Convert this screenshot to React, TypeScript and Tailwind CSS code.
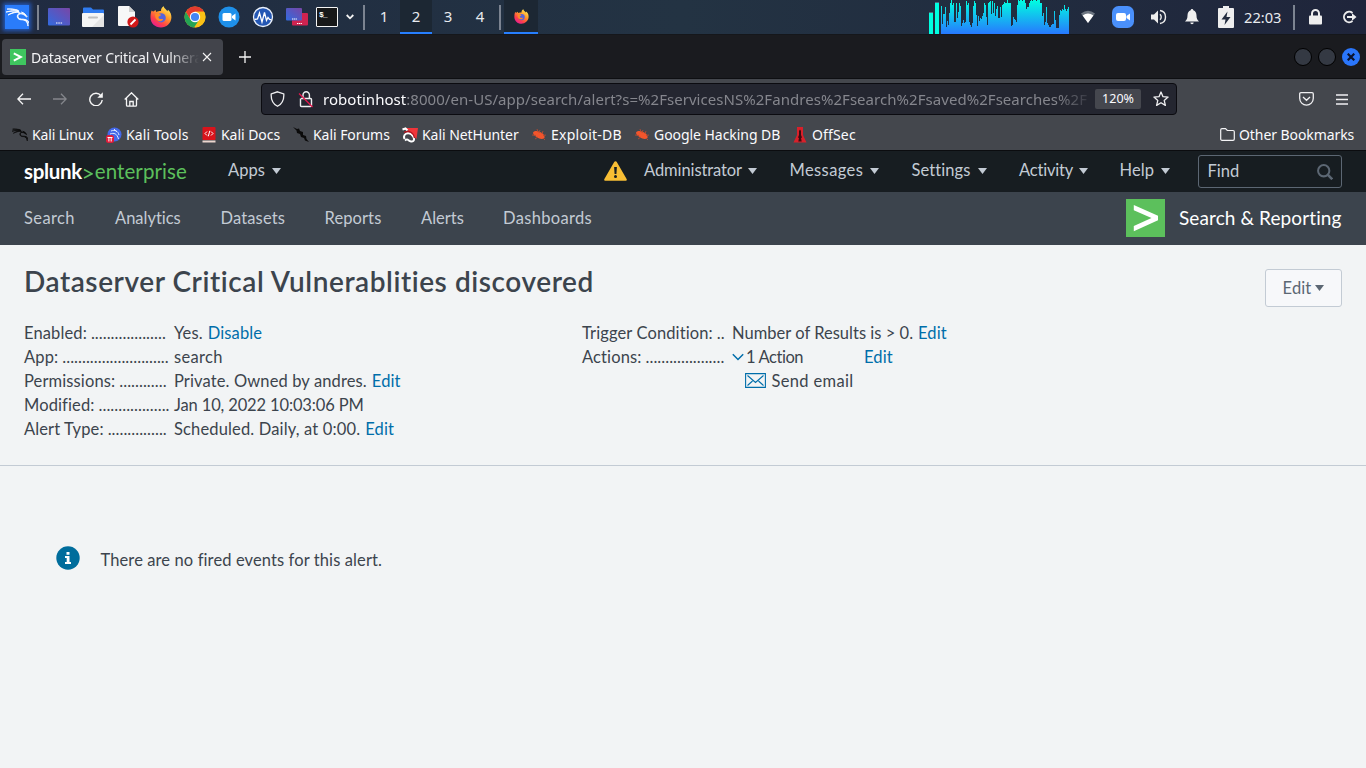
import type { ReactNode } from "react";
import { SiKalilinux } from "react-icons/si";

const LOAD = [
  18, 72, 42, 42, 22, 80, 63, 75, 38, 10, 0, 14, 10, 66, 66, 10, 54, 36, 8, 18, 78, 70, 60, 68, 66, 2, 14, 10, 65, 76,
  80, 70, 18, 2, 10, 45, 78, 48, 62, 54, 58, 48, 38, 10, 16, 50, 74, 8, 5, 3, 42, 2, 40, 10, 48, 26, 18, 55, 54, 20,
  50, 14, 12, 5, 10, 10, 0, 8, 10, 10, 78, 74, 50, 58, 60, 66, 15, 0, 4, 0, 0, 3, 0, 0, 8, 26, 20, 22, 8, 4, 0, 3, 0,
  0, 0, 4, 0, 0, 0, 8, 10, 48, 40, 76, 66, 22, 68, 74, 82, 82, 74, 72, 72, 32, 60, 84, 84, 84, 45, 30, 33, 28, 30, 15,
  26, 34, 28, 22,
];

function LoadGraph() {
  return (
    <svg className="ml-[1px] h-[34px] w-[129px] shrink-0" viewBox="0 0 129 34" shapeRendering="crispEdges">
      <defs>
        <linearGradient id="load" x1="0" y1="0" x2="0" y2="34" gradientUnits="userSpaceOnUse">
          <stop offset="0" stopColor="#00ffe0" />
          <stop offset="1" stopColor="#2778ff" />
        </linearGradient>
      </defs>
      {LOAD.map((top, i) => (
        <rect key={i} x={i} y={top / 3} width="1" height={34 - top / 3} fill="url(#load)" />
      ))}
    </svg>
  );
}

function Firefox({ size }: { size: number }) {
  return (
    <svg width={size} height={size} viewBox="0 0 22 22" className="shrink-0">
      <defs>
        <linearGradient id="fox" x1="0.85" y1="0.05" x2="0.25" y2="0.95">
          <stop offset="0" stopColor="#fff05a" />
          <stop offset="0.4" stopColor="#ff9a2a" />
          <stop offset="0.75" stopColor="#ff4248" />
          <stop offset="1" stopColor="#e9208b" />
        </linearGradient>
      </defs>
      <path
        fill="url(#fox)"
        d="M1.6 4.5C2.4 5.2 3 5.7 3.5 5.6C4 4.7 4.8 4.2 5.6 3.9L6.2 6C8 5 9 5.1 11 5C10.8 3 12 1 13.8 0.2C13.8 2.4 16.4 3.3 17.4 5.2L18 3.8C20.6 6.2 21.6 9 21.4 11.8C21 17.6 16.4 21.5 11 21.5C5 21.5 0.5 17.2 0.5 11.2C0.5 8.7 0.8 6.6 1.6 4.5Z"
      />
      <circle cx="11.2" cy="11.8" r="4.6" fill="#5464dc" />
      <path fill="#ff8a26" d="M5 8.3C7.4 7 9.3 8 10.7 8.5C11.6 9.6 9.4 10.1 8.6 10.7C8 12 9.6 13.4 11.4 13C13 12.6 13.4 13.4 12.6 14.2C9.2 16.6 5 14.4 5 8.3Z" />
    </svg>
  );
}

function Chrome() {
  return (
    <svg width="22" height="22" viewBox="0 0 22 22" className="shrink-0">
      <circle cx="11" cy="11" r="10.5" fill="#fbc116" />
      <path d="M1.9 5.7A10.5 10.5 0 0 0 10 21.5L15.5 13.6L11 16L6.5 13.6Z" fill="#23a455" />
      <path d="M1.9 5.7A10.5 10.5 0 0 1 20.1 5.8L11 5.8L6.5 13.6Z" fill="#e33b2e" />
      <path d="M20.1 5.8H11L15.5 13.6L11 21.5A10.5 10.5 0 0 0 20.1 5.8Z" fill="#fbc116" />
      <circle cx="11" cy="11" r="5.2" fill="#fff" />
      <circle cx="11" cy="11" r="4.1" fill="#4285f4" />
    </svg>
  );
}

function Desk({ n, active }: { n: string; active?: boolean }) {
  return (
    <div
      className={
        active
          ? "flex h-[34px] w-8 items-center justify-center border-b-2 border-[#277fff] bg-[#1c2733] pt-[1px]"
          : "flex h-[34px] w-8 items-center justify-center pb-[1px]"
      }
    >
      {n}
    </div>
  );
}

function Taskbar() {
  return (
    <div className="flex h-[34px] items-center bg-linear-to-r from-[#202b41] via-[#233343] to-[#1f253b] font-['Noto_Sans',sans-serif] text-[15px] text-[#e8ebef]">
      <div className="ml-[5px] flex size-6 items-center justify-center bg-[#2a7cfb] shadow-[0_0_4px_2px_#2458b8]">
        <SiKalilinux className="size-[23px] stroke-white stroke-[0.9] text-white" />
      </div>
      <div className="ml-2 h-[25px] w-[2px] bg-[#7c8491]" />
      <svg className="ml-[9px] h-[18px] w-[22px] shrink-0" viewBox="0 0 22 18">
        <defs>
          <linearGradient id="desk" x1="0" y1="1" x2="1" y2="0">
            <stop offset="0" stopColor="#316be0" />
            <stop offset="1" stopColor="#7946a6" />
          </linearGradient>
        </defs>
        <rect width="22" height="17.5" rx="1" fill="url(#desk)" />
        <path d="M8 15h1.500M10.300 15h1.500M12.600 15h1.500" stroke="#fff" strokeWidth="1" />
      </svg>
      <svg className="ml-3 h-5 w-[22px] shrink-0" viewBox="0 0 22 20">
        <path d="M1 1.500a1 1 0 0 1 1-1h7l2 2h10a1 1 0 0 1 1 1V8H1Z" fill="#2f7bf0" />
        <rect y="6" width="22" height="14" rx="1" fill="#f5f5f5" />
        <path d="M22 8v11a1 1 0 0 1-1 1H10Z" fill="#e4e4e4" />
        <rect x="6" y="9.500" width="10" height="2" rx="1" fill="#c0c0c0" />
      </svg>
      <svg className="ml-[14px] h-[22px] w-[21px] shrink-0" viewBox="0 0 21 22">
        <path d="M1 0h10l6 6v14H1a1 1 0 0 1-1-1V1a1 1 0 0 1 1-1Z" fill="#f7f7f7" />
        <path d="M11 0l6 6h-6Z" fill="#d0d0d0" />
        <circle cx="15" cy="16" r="5.600" fill="#d21919" />
        <path d="M12.500 18.500l5-5" stroke="#fff" strokeWidth="1.800" />
      </svg>
      <div className="ml-[11px] flex">
        <Firefox size={22} />
      </div>
      <div className="ml-3 flex">
        <Chrome />
      </div>
      <svg className="ml-3 size-[22px] shrink-0" viewBox="0 0 22 22">
        <circle cx="11" cy="11" r="10.500" fill="#1e90ea" />
        <rect x="4.500" y="7" width="9" height="8" rx="1.500" fill="#fff" />
        <path d="M14 10l3.500-2.500v7L14 12Z" fill="#fff" />
      </svg>
      <svg className="ml-3 size-[22px] shrink-0" viewBox="0 0 22 22">
        <circle cx="11" cy="11" r="9.500" fill="#2457b4" stroke="#eaf1fb" strokeWidth="1.300" />
        <path d="M2.500 13.500L5.500 13l2-6 2.500 9 2.500-9.500 2 8 1.500-3 1.500 2 2 .3" fill="none" stroke="#fff" strokeWidth="1.300" />
      </svg>
      <svg className="ml-3 h-[18px] w-[22px] shrink-0" viewBox="0 0 22 18">
        <rect x="6" y="5" width="16" height="12.500" rx="1" fill="#cf2350" />
        <rect width="16" height="12.500" rx="1" fill="url(#desk)" />
        <path d="M6 11h5M11 15.500h5" stroke="#fff" strokeWidth="1" strokeDasharray="1.300 .5" />
      </svg>
      <div className="ml-2 flex h-5 w-[22px] rounded-[1px] border border-[#f4f4f4] bg-[#171819] pt-[2px] pl-[2px] font-['Liberation_Mono',monospace] text-[8px] leading-[9px] font-bold tracking-[-1px] text-white">
        $_
      </div>
      <svg className="ml-2 h-[6px] w-2 shrink-0" viewBox="0 0 8 6">
        <path d="M.7 1l3.300 3.300L7.300 1" fill="none" stroke="#f4f4f4" strokeWidth="1.800" />
      </svg>
      <div className="ml-[9px] h-[25px] w-[2px] bg-[#7c8491]" />
      <div className="ml-[3px] flex">
        <Desk n="1" />
        <Desk n="2" active />
        <Desk n="3" />
        <Desk n="4" />
      </div>
      <div className="ml-[3px] h-[25px] w-[2px] bg-[#7c8491]" />
      <div className="ml-[3px] flex h-[34px] w-[34px] items-center justify-center border-b-2 border-[#277fff] bg-[#1c2733]">
        <Firefox size={15} />
      </div>
      <svg className="ml-auto h-[34px] w-[11px] shrink-0" viewBox="0 0 11 34" shapeRendering="crispEdges">
        <path d="M0 13h4v21H0ZM6 3h4v31H6Z" fill="#00ffe0" />
        <path d="M0 12h4v1H0ZM6 2h4v1H6Z" fill="#4a6f80" />
      </svg>
      <LoadGraph />
      <svg className="ml-[11px] h-[14px] w-[14px] shrink-0" viewBox="0 0 14 14">
        <path d="M0 3.500Q7-2 14 3.500L7 13Z" fill="#6d7682" />
        <path d="M1.600 5.500Q7 1.500 12.400 5.500L7 13Z" fill="#fff" />
      </svg>
      <svg className="ml-[17px] size-[22px] shrink-0" viewBox="0 0 22 22">
        <rect width="22" height="22" rx="6.500" fill="#4a90fb" />
        <rect x="4" y="7" width="10" height="8" rx="2" fill="#fff" />
        <path d="M14.500 10l3.500-2.500v7L14.500 12Z" fill="#fff" />
      </svg>
      <svg className="ml-[17px] h-4 w-4 shrink-0" viewBox="0 0 16 16">
        <path d="M0 5.500h3L7 1.500v13L3 10.500H0Z" fill="#eee" />
        <path d="M9 5.200c1.600 1.600 1.600 4 0 5.600M9 1.500c3 .5 5.500 3 5.500 6.500S12 14 9 14.500" fill="none" stroke="#eee" strokeWidth="1.400" />
      </svg>
      <svg className="ml-[18px] h-4 w-[14px] shrink-0" viewBox="0 0 14 16">
        <path d="M7 0c.8 0 1.300.6 1.300 1.300C10.500 2 11.500 4 11.500 6.500c0 3 .8 4.500 2.500 6H0c1.700-1.500 2.500-3 2.500-6C2.500 4 3.500 2 5.700 1.300 5.700.6 6.200 0 7 0ZM5.300 13.500h3.400a1.700 1.700 0 0 1-3.400 0Z" fill="#f0f0f0" />
      </svg>
      <svg className="ml-[19px] h-[22px] w-4 shrink-0" viewBox="0 0 16 22">
        <path d="M5 0h6v2h4a1 1 0 0 1 1 1v18a1 1 0 0 1-1 1H1a1 1 0 0 1-1-1V3a1 1 0 0 1 1-1h4Z" fill="#eee" />
        <path d="M9.500 5.500L3.500 13.500H7.500L6.500 19L12.500 11H8.500Z" fill="#222b3e" />
      </svg>
      <div className="ml-[10px] w-[38px] pb-[1px] text-[14.67px]">22:03</div>
      <div className="ml-[11px] h-[25px] w-[2px] bg-[#7c8491]" />
      <svg className="ml-[14px] h-4 w-[13px] shrink-0" viewBox="0 0 13 16">
        <path d="M3 7.500V4.500a3.500 3.500 0 0 1 7 0v3" fill="none" stroke="#eee" strokeWidth="2" />
        <rect y="6.500" width="13" height="9" rx="1" fill="#eee" />
      </svg>
      <svg className="mr-[9px] ml-5 h-[14px] w-[15px] shrink-0" viewBox="0 0 15 14">
        <path d="M10.500 3A5.200 5.200 0 1 0 10.500 11" fill="none" stroke="#eee" strokeWidth="1.900" />
        <path d="M5 6h5V3.300L14.500 7L10 10.700V8H5Z" fill="#eee" />
      </svg>
    </div>
  );
}

function TabStrip() {
  return (
    <div className="flex h-11 items-center border-t border-[#15171b] bg-[#1a1b1f] font-['Noto_Sans',sans-serif]">
      <div className="ml-[2px] flex h-9 w-[221px] items-center rounded-[4px] bg-[#42444b]">
        <div className="ml-2 flex size-4 items-center justify-center bg-[#3fc65f]">
          <svg className="h-[10px] w-[10px]" viewBox="0 0 10 10">
            <path d="M.8 1.300L8 5L.8 8.700" fill="none" stroke="#fff" strokeWidth="2" />
          </svg>
        </div>
        <div className="ml-[5px] w-[168px] mask-r-from-82% mask-r-to-100% pt-[2px] text-[14px] leading-5 tracking-[-0.140px] whitespace-nowrap text-[#f4f4f6]">
          Dataserver Critical Vulnera
        </div>
        <svg className="ml-[3px] size-[10px]" viewBox="0 0 10 10">
          <path d="M1 1l8 8M9 1L1 9" stroke="#f4f4f4" strokeWidth="1.100" />
        </svg>
      </div>
      <svg className="ml-4 size-3" viewBox="0 0 12 12">
        <path d="M6 0v12M0 6h12" stroke="#f4f4f4" strokeWidth="1.300" />
      </svg>
      <div className="mr-[6px] ml-auto flex gap-[6px]">
        <div className="size-[18px] rounded-full border border-black bg-[#343943]" />
        <div className="size-[18px] rounded-full border border-black bg-[#343943]" />
        <div className="flex size-[18px] items-center justify-center rounded-full bg-[#2a76fb]">
          <svg className="size-2" viewBox="0 0 8 8">
            <path d="M.7.7l6.600 6.600M7.300.7L.7 7.300" stroke="#0b1430" strokeWidth="2.200" />
          </svg>
        </div>
      </div>
    </div>
  );
}

function UrlRow() {
  return (
    <div className="flex h-[41px] items-center border-t border-[#0e0f12] bg-[#44474d] font-['Noto_Sans',sans-serif]">
      <svg className="ml-[17px] h-3 w-[14px]" viewBox="0 0 14 12">
        <path d="M14 6H1M6 .7L.8 6L6 11.300" fill="none" stroke="#f6f6f6" strokeWidth="1.300" />
      </svg>
      <svg className="ml-[22px] h-3 w-[14px]" viewBox="0 0 14 12">
        <path d="M0 6h13M8 .7L13.200 6L8 11.300" fill="none" stroke="#85878c" strokeWidth="1.300" />
      </svg>
      <svg className="ml-[22px] h-[14px] w-[14px]" viewBox="0 0 14 14">
        <path d="M12 3.800A6.200 6.200 0 1 0 13.200 8" fill="none" stroke="#f6f6f6" strokeWidth="1.400" />
        <path d="M13.800.3v5.500H8.300Z" fill="#f6f6f6" />
      </svg>
      <svg className="ml-[21px] h-[15px] w-[15px]" viewBox="0 0 15 15">
        <path d="M.7 7.500L7.500.8l6.800 6.700M2.500 6v7.200c0 .7.300 1 1 1h8c.7 0 1-.3 1-1V6M5.800 14V9.500h3.400V14" fill="none" stroke="#f6f6f6" strokeWidth="1.300" />
      </svg>
      <div className="ml-[122px] flex h-8 w-[916px] items-center rounded-[4px] border border-[#0b0b10] bg-[#242630]">
        <svg className="ml-2 h-4 w-[15px] shrink-0" viewBox="0 0 15 16">
          <path d="M7.500.8L13.800 3c.3 5.200-1 9.500-6.300 12.300C2.200 12.500.9 8.200 1.200 3Z" fill="none" stroke="#f0f0f2" strokeWidth="1.300" />
        </svg>
        <svg className="ml-[13px] h-[17px] w-4 shrink-0" viewBox="0 0 16 17">
          <path d="M5 7V4a3.200 3.200 0 0 1 6.400 0v3M3 7.500h9.500c.6 0 1 .4 1 1v6c0 .6-.4 1-1 1H3.500c-.6 0-1-.4-1-1V7.500" fill="none" stroke="#f0f0f2" strokeWidth="1.400" />
          <path d="M1 2.500L14.500 16" stroke="#e8164e" strokeWidth="1.300" />
        </svg>
        <div className="ml-[9px] w-[764px] mask-r-from-96% mask-r-to-101% text-[15px] leading-5 tracking-[0.045px] whitespace-nowrap text-[#85868d]">
          <span className="text-[#fbfbfe]">robotinhost</span>
          :8000/en-US/app/search/alert?s=%2FservicesNS%2Fandres%2Fsearch%2Fsaved%2Fsearches%2F
        </div>
        <div className="ml-2 flex h-5 w-[46px] items-center justify-center rounded-[2px] bg-[#45474e] pt-[1px] text-[12.500px] text-[#fbfbfe]">120%</div>
        <svg className="ml-3 size-4" viewBox="0 0 16 16">
          <path d="M8 1l2 4.700 5.100.4-3.900 3.300 1.200 5L8 11.700l-4.400 2.700 1.200-5L.9 6.100 6 5.700Z" fill="none" stroke="#f0f0f2" strokeWidth="1.300" strokeLinejoin="round" />
        </svg>
      </div>
      <svg className="ml-auto h-[14px] w-[15px]" viewBox="0 0 15 14">
        <path d="M2 .7h11c.8 0 1.300.5 1.300 1.300v4.300a6.800 6.800 0 0 1-13.600 0V2C.7 1.200 1.200.7 2 .7ZM4 5l3.500 3.300L11 5" fill="none" stroke="#f0f0f2" strokeWidth="1.300" />
      </svg>
      <svg className="mr-[18px] ml-[22px] h-[11px] w-3" viewBox="0 0 12 11">
        <path d="M0 1h12M0 5.500h12M0 10h12" stroke="#f0f0f2" strokeWidth="1.300" />
      </svg>
    </div>
  );
}

function Bug() {
  return (
    <svg className="h-[14px] w-4" viewBox="0 0 16 14">
      <path d="M2 4.500C4 2 8 3 11 5c2 1.300 3 3.500 2.500 5-2 1.500-5 1-7.500-.8C3.800 8 2 6.500 2 4.500Z" fill="#f2552c" />
      <path d="M1 7l4 .5M4 11l3-2M9 2L8 5M6 1l1 3M12 3l-1 3M15 7l-3 .5M14 12l-2-2" stroke="#b84a30" strokeWidth=".9" />
    </svg>
  );
}

function Mark({ icon, label, className }: { icon: ReactNode; label: string; className: string }) {
  return (
    <div className={`flex items-center ${className}`}>
      <div className="mr-1 flex w-4 shrink-0 justify-center">{icon}</div>
      <span className="whitespace-nowrap">{label}</span>
    </div>
  );
}

function Bookmarks() {
  return (
    <div className="flex h-[31px] items-center bg-[#44474d] pl-3 font-['Noto_Sans',sans-serif] text-[14px] tracking-[-0.050px] text-[#fbfbfe]">
      <Mark className="w-[94px] tracking-[-0.150px]" icon={<SiKalilinux className="size-4 stroke-[#0b0b0b] stroke-1 text-[#0b0b0b]" />} label="Kali Linux" />
      <Mark
        className="w-[95px] tracking-[0.100px]"
        icon={
          <svg className="size-4" viewBox="0 0 16 16">
            <circle cx="8.500" cy="7.500" r="7" fill="#4468e8" />
            <path d="M5 4c4-1.500 7 0 8 4M4 7c4-1.500 7-.5 8.500 5M8 2l3 3" fill="none" stroke="#dfe8ff" strokeWidth="1" />
            <rect y="8" width="8" height="8" rx="2.500" fill="#e01c3a" />
            <path d="M1.500 10.500h5M2.900 10.500v4M5.200 10.500v4" stroke="#fff" />
          </svg>
        }
        label="Kali Tools"
      />
      <Mark
        className="w-[92px]"
        icon={
          <svg className="size-4" viewBox="0 0 16 16">
            <rect x="1.500" width="13" height="13" rx="1" fill="#d8141c" />
            <path d="M1.500 13.500h13v2h-13z" fill="#ecd6cf" />
            <path d="M6 4.500L4 6.500l2 2M10 4.500l2 2-2 2M8.800 3.800l-1.500 5.500" fill="none" stroke="#fff" />
          </svg>
        }
        label="Kali Docs"
      />
      <Mark
        className="w-[109px]"
        icon={
          <svg className="size-4" viewBox="0 0 16 16">
            <path d="M0 0l4 2 2-.5 1 2.500 3 1 0 3 3 1 .5 3L16 15l-4-1.500-1-2.500-3-1-1-3-3-1-.5-2.500Z" fill="#0a0a0a" />
          </svg>
        }
        label="Kali Forums"
      />
      <Mark
        className="w-[129px]"
        icon={
          <svg className="size-4" viewBox="0 0 16 16">
            <path d="M3 1h13l-1.500 11L9 6Z" fill="#f0353a" />
            <path d="M.5 2.500l3-1 2 2M2.500 12C.5 7 6 4.500 9.500 7.500S13 15 9 14.500 6.500 10.500 3 13.500" fill="none" stroke="#fff" strokeWidth="2" />
            <path d="M2 5.500C7 3 11.500 5.500 12.500 11" fill="none" stroke="#b3141f" strokeWidth="1.300" />
          </svg>
        }
        label="Kali NetHunter"
      />
      <Mark className="w-[103px] tracking-[0.250px]" icon={<Bug />} label="Exploit-DB" />
      <Mark className="w-[158px]" icon={<Bug />} label="Google Hacking DB" />
      <Mark
        className="w-[80px] tracking-[0.150px]"
        icon={
          <svg className="size-4" viewBox="0 0 16 16">
            <path d="M5 0h6v8l3.500 7.500h-13L5 8Z" fill="#d8202a" />
            <path d="M8 2.500l1 1.500v4l1 2.500-1 .5.700 3.500H6.300L7 11l-1-.5L7 8V4Z" fill="#3a0c10" />
          </svg>
        }
        label="OffSec"
      />
      <div className="mr-3 ml-auto flex items-center gap-1">
        <svg className="h-[13px] w-[15px]" viewBox="0 0 15 13">
          <path d="M.7 2c0-.8.500-1.300 1.300-1.300h3.500l1.800 1.800H13c.8 0 1.300.5 1.300 1.300V11c0 .8-.5 1.300-1.300 1.300H2C1.200 12.300.7 11.800.7 11Z" fill="none" stroke="#f4f4f6" strokeWidth="1.200" />
        </svg>
        <span className="w-[115px] whitespace-nowrap tracking-[-0.080px]">Other Bookmarks</span>
      </div>
    </div>
  );
}

function Caret() {
  return (
    <svg className="h-[6px] w-[9px] shrink-0" viewBox="0 0 9 6">
      <path d="M0 0h9L4.500 6Z" fill="currentColor" />
    </svg>
  );
}

function Menu({ label, className }: { label: string; className: string }) {
  return (
    <div className={`flex items-center justify-between pb-[2px] ${className}`}>
      <span className="whitespace-nowrap">{label}</span>
      <Caret />
    </div>
  );
}

function SplunkBar() {
  return (
    <div className="flex h-[42px] items-center border-t border-[#0b0c0f] bg-[#171d21] text-[16.500px] text-[#c3cbd4]">
      <div className="mb-[2px] ml-6 flex w-[163px] items-baseline text-[20.500px] leading-6">
        <span className="w-[59px] font-bold tracking-[-0.300px] text-white">splunk</span>
        <svg className="mr-[2px] h-[11px] w-[10px]" viewBox="0 0 10 11">
          <path d="M1 1.500L9 5.800L1 10" fill="none" stroke="#5cc05c" strokeWidth="1.700" />
        </svg>
        <span className="tracking-[0.100px] text-[#5cc05c]">enterprise</span>
      </div>
      <Menu label="Apps" className="ml-[41px] w-[53px]" />
      <svg className="mb-[2px] ml-[323px] h-5 w-[23px] shrink-0" viewBox="0 0 23 20">
        <path d="M11.500.3c.6 0 1 .3 1.300.8l9.800 17c.5.900 0 1.700-1 1.700H1.400c-1 0-1.500-.8-1-1.700l9.800-17c.3-.5.700-.8 1.300-.8Z" fill="#f8be34" />
        <path d="M10.100 6h2.800l-.5 7h-1.800Z" fill="#171d21" />
        <circle cx="11.500" cy="15.500" r="1.500" fill="#171d21" />
      </svg>
      <Menu label="Administrator" className="ml-[17px] w-[112.500px] tracking-[-0.090px]" />
      <Menu label="Messages" className="ml-[33px] w-[89px] tracking-[0.400px]" />
      <Menu label="Settings" className="ml-[33px] w-[75px] tracking-[0.080px]" />
      <Menu label="Activity" className="ml-[32.500px] w-[68.500px] tracking-[-0.200px]" />
      <Menu label="Help" className="ml-8 w-[50px] tracking-[0.100px]" />
      <div className="ml-[28px] flex h-[33px] w-36 items-center justify-between rounded-[3px] border border-[#5c6773] pr-[8px] pl-[9px]">
        <span className="pb-[1px]">Find</span>
        <svg className="size-4" viewBox="0 0 15 15">
          <circle cx="6.300" cy="6.300" r="5.300" fill="none" stroke="#5c6773" strokeWidth="1.900" />
          <path d="M10 10l4.300 4.300" stroke="#5c6773" strokeWidth="2.400" />
        </svg>
      </div>
    </div>
  );
}

function AppNav() {
  return (
    <div className="flex h-[53px] items-center bg-[#3c444d] pb-[1px] text-[16.500px] text-[#c3cbd4]">
      <span className="ml-6 w-[91px] tracking-[0.400px]">Search</span>
      <span className="w-[105.500px] tracking-[-0.010px]">Analytics</span>
      <span className="w-[104px] tracking-[0.140px]">Datasets</span>
      <span className="w-[96.500px] tracking-[0.100px]">Reports</span>
      <span className="w-[82px] tracking-[0]">Alerts</span>
      <span className="tracking-[0.330px]">Dashboards</span>
      <div className="ml-auto flex h-[38px] w-[39px] items-center justify-center bg-[#5cc05c]">
        <svg className="h-7 w-[26px]" viewBox="0 0 26 28">
          <path d="M.8 1v5.300L18.500 14 .8 22v5.300L25 16.300v-4.500Z" fill="#fff" />
        </svg>
      </div>
      <span className="mr-6 ml-[14px] w-[163px] text-[19px] tracking-[0.100px] whitespace-nowrap text-white">Search &amp; Reporting</span>
    </div>
  );
}

function Row({ label, dots, children }: { label: string; dots: number; children: ReactNode }) {
  return (
    <div className="flex h-6 items-center">
      <div className="flex w-[150px] shrink-0 whitespace-nowrap">
        <span className="mr-1 shrink-0">{label}</span>
        <span className="tracking-[0.050px]">{".".repeat(dots)}</span>
      </div>
      <div className="flex whitespace-nowrap">{children}</div>
    </div>
  );
}

function Link({ children }: { children: string }) {
  return <a className="ml-[5px] tracking-[0.120px] text-[#006eaa]">{children}</a>;
}

export default function App() {
  return (
    <div className="flex h-[768px] w-[1366px] flex-col overflow-hidden bg-[#f2f4f5] font-[Lato,sans-serif] [font-variant-ligatures:none]">
      <Taskbar />
      <TabStrip />
      <UrlRow />
      <Bookmarks />
      <SplunkBar />
      <AppNav />
      <main className="flex h-[221px] flex-col border-b border-[#c3cbd4] px-6 text-[16.500px] tracking-[0.120px] text-[#3c444d]">
        <div className="flex justify-between pt-6">
          <h1 className="-mt-[7px] text-[28px] leading-[38px] font-semibold tracking-[0.560px]">Dataserver Critical Vulnerablities discovered</h1>
          <button className="flex h-[38px] w-[77px] items-center justify-center gap-1 rounded-[3px] border border-[#c3cbd4] bg-[#f7f8fa] text-[#5c6773]">
            Edit <Caret />
          </button>
        </div>
        <div className="mt-[14px] flex">
          <div className="w-[558px]">
            <Row label="Enabled:" dots={19}>
              Yes. <Link>Disable</Link>
            </Row>
            <Row label="App:" dots={27}>
              <span className="tracking-[0.350px]">search</span>
            </Row>
            <Row label="Permissions:" dots={12}>
              <span>Private. Owned by andres.</span>
              <Link>Edit</Link>
            </Row>
            <Row label="Modified:" dots={18}>
              <span className="tracking-[-0.140px]">Jan 10, 2022 10:03:06 PM</span>
            </Row>
            <Row label="Alert Type:" dots={15}>
              <span className="tracking-[0.150px]">Scheduled. Daily, at 0:00.</span>
              <Link>Edit</Link>
            </Row>
          </div>
          <div>
            <Row label="Trigger Condition:" dots={2}>
              <span className="tracking-[0.020px]">Number of Results is &gt; 0.</span>
              <Link>Edit</Link>
            </Row>
            <Row label="Actions:" dots={20}>
              <svg className="mt-2 mr-[2px] h-2 w-3" viewBox="0 0 12 8">
                <path d="M.8 1.300L6 6.500l5.200-5.200" fill="none" stroke="#006eaa" strokeWidth="1.500" />
              </svg>
              <span className="w-[113px] tracking-[-0.420px]">1 Action</span>
              <Link>Edit</Link>
            </Row>
            <div className="ml-[162.500px] flex h-6 items-center gap-[6px]">
              <svg className="mb-[1px] h-[15px] w-[21px]" viewBox="0 0 21 15">
                <path d="M.6.6h19.800v13.800H.6ZM2.500 2.500l8 7 8-7M2.500 12.500l5-4.500M18.500 12.500l-5-4.500" fill="none" stroke="#006eaa" strokeWidth="1.100" />
              </svg>
              <span className="tracking-[0.340px]">Send email</span>
            </div>
          </div>
        </div>
      </main>
      <div className="mt-[80px] ml-14 flex h-6 items-center text-[16.500px] tracking-[0.110px] text-[#3c444d]">
        <svg className="mr-[20.500px] size-6" viewBox="0 0 24 24">
          <circle cx="12" cy="12" r="11.700" fill="#006d9c" />
          <path d="M9 10h4.500v6H15v2H9v-2h1.700v-4H9ZM10.500 6h3v2.700h-3Z" fill="#fff" />
        </svg>
        <span className="mt-[4px]">There are no fired events for this alert.</span>
      </div>
    </div>
  );
}
